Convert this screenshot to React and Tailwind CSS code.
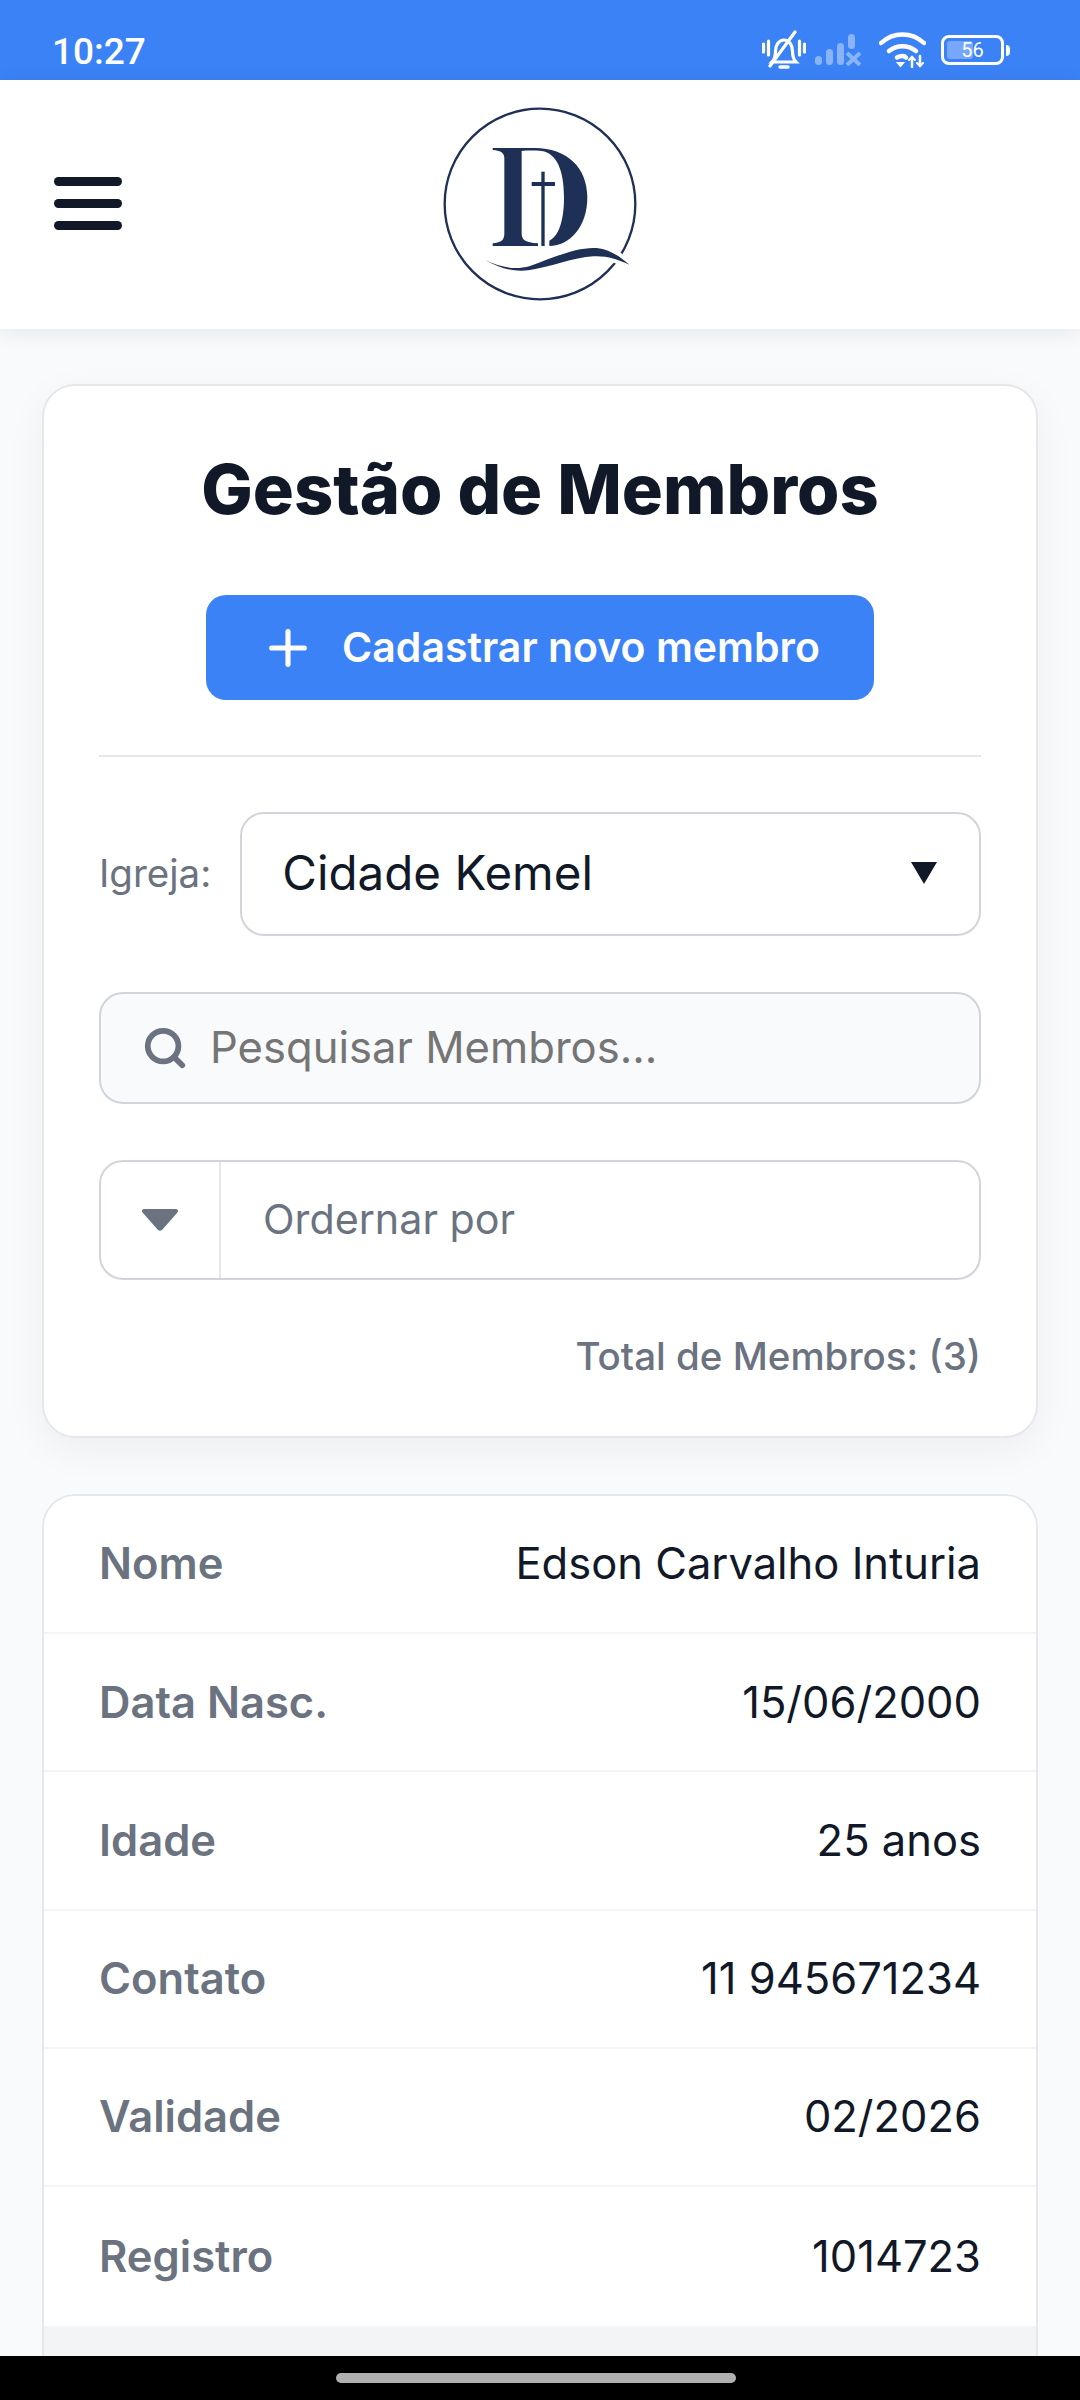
import React from 'react';
import { Plus, Search } from 'lucide-react';

const rows = [
  ['Nome', 'Edson Carvalho Inturia'],
  ['Data Nasc.', '15/06/2000'],
  ['Idade', '25 anos'],
  ['Contato', '11 945671234'],
  ['Validade', '02/2026'],
  ['Registro', '1014723'],
];

function StatusBar() {
  return (
    <div className="flex h-[80px] shrink-0 items-end justify-between bg-[#3b82f6] pb-[10px] pl-[52px] pr-[70px] text-white">
      <span className="font-[Roboto,sans-serif] text-[37px] font-medium leading-[36px]">10:27</span>
      <div className="flex items-center">
        <svg width="44" height="40" viewBox="0 0 44 40" fill="none" stroke="white" strokeWidth="3.200" strokeLinecap="round">
          <path d="M1.500 14v8M6.500 11v14M37.500 11v14M42.500 14v8" />
          <path d="M10 32c3-3 3.500-6 3.500-11 0-6 3.500-11 8.500-11 5 0 8.500 5 8.500 11 0 5 .5 8 3.500 11z" />
          <path d="M18 37h8" strokeWidth="3.500" />
          <path d="M8 36 33 2" />
        </svg>
        <svg className="ml-[9px] opacity-40" width="48" height="32" viewBox="0 0 48 32" fill="white">
          <rect x="0" y="22" width="7" height="9" rx="3.500" />
          <rect x="11" y="15" width="7" height="16" rx="3.500" />
          <rect x="22" y="9" width="7" height="22" rx="3.500" />
          <rect x="33" y="0" width="7" height="15" rx="3.500" />
          <path d="M32 19l13 12M45 19 32 31" stroke="white" strokeWidth="4" />
        </svg>
        <svg className="ml-[16px]" width="47" height="36" viewBox="0 0 47 36" fill="none" stroke="white" strokeWidth="4.500" strokeLinecap="round">
          <path d="M2 11C14-.5 33-.5 45 11" />
          <path d="M10 19c8-6.500 19-6.500 27 0" />
          <path d="M18 25.500c3.500-2 7.500-2 9 0" />
          <path d="M19 31h5l-2.500 3z" fill="white" strokeWidth="2" />
          <path d="M33 25v10M41 24v10" strokeWidth="2.500" />
          <path d="M30 28l3-3 3 3M38 31l3 3 3-3" strokeWidth="2" />
        </svg>
        <div className="relative ml-[15px] flex h-[30px] w-[63px] items-center justify-center rounded-[8px] border-[3px] border-white">
          <div className="absolute bottom-[3px] left-[3px] top-[3px] w-[26px] rounded-[3px] bg-white/30" />
          <span className="relative font-[Roboto,sans-serif] text-[20px] leading-none">56</span>
        </div>
        <div className="ml-[2px] h-[11px] w-[4px] rounded-r-full bg-white" />
      </div>
    </div>
  );
}

function Logo() {
  return (
    <svg width="240" height="230" viewBox="0 0 720 690" fill="#1f3057">
      <circle cx="360" cy="342" r="286" fill="none" stroke="#1f3057" strokeWidth="7" />
      <path d="M218 174H345C440 174 502 232 502 322C502 410 450 468 388 468V452C415 440 432 395 432 322C432 240 410 190 365 183C345 181 320 181 305 183V430C305 450 315 458 354 460V468H218V460C245 458 253 450 253 430V205C253 190 245 182 218 180Z" />
      <rect x="364" y="245" width="10" height="223" />
      <rect x="335" y="276" width="70" height="12" />
      <path d="M195 510C240 530 280 542 330 528C400 503 470 470 530 474C570 478 600 500 628 524C590 507 560 497 520 499C460 502 390 532 330 540C280 547 240 535 195 510Z" stroke="white" strokeWidth="24" strokeLinejoin="round" />
      <path d="M195 510C240 530 280 542 330 528C400 503 470 470 530 474C570 478 600 500 628 524C590 507 560 497 520 499C460 502 390 532 330 540C280 547 240 535 195 510Z" />
    </svg>
  );
}

function Header() {
  return (
    <header className="relative z-10 grid h-[249px] shrink-0 grid-cols-[1fr_auto_1fr] items-center bg-white shadow-[0_4px_20px_rgba(0,0,0,0.08)]">
      <div className="mb-[2px] ml-[54px] flex w-[68px] flex-col gap-[13px]">
        <div className="h-[9px] rounded-full bg-[#111827]" />
        <div className="h-[9px] rounded-full bg-[#111827]" />
        <div className="h-[9px] rounded-full bg-[#111827]" />
      </div>
      <Logo />
      <div />
    </header>
  );
}

export default function App() {
  return (
    <div className="flex h-[2400px] flex-col overflow-hidden bg-[#f9fafb] font-[Inter,sans-serif]">
      <StatusBar />
      <Header />
      <main className="min-h-0 flex-1 overflow-hidden px-[42px] pt-[55px]">
        <section className="rounded-[33px] border-2 border-[#e5e7eb] bg-white px-[55px] pb-[50px] pt-[59px] shadow-[0_12px_40px_rgba(0,0,0,0.05)]">
          <h1 className="text-center text-[68.5px] font-extrabold leading-[90px] text-[#111827]">Gestão de Membros</h1>
          <div className="mt-[60px] flex justify-center">
            <button className="flex h-[105px] w-[668px] items-center justify-center gap-[26px] rounded-[20px] bg-[#3b82f6] text-[41px] font-semibold text-white">
              <Plus size={56} strokeWidth={2.2} />
              Cadastrar novo membro
            </button>
          </div>
          <div className="mt-[55px] h-[2px] bg-[#e5e7eb]" />
          <div className="mt-[55px] flex items-center gap-[29px]">
            <label className="text-[38.5px] text-[#6b7280]">Igreja:</label>
            <div className="flex h-[124px] flex-1 items-center justify-between rounded-[24px] border-2 border-[#d1d5db] bg-white pb-[2px] pl-[40px] pr-[42px] text-[47.5px] text-[#111827]">
              Cidade Kemel
              <svg width="26" height="22" viewBox="0 0 26 22" fill="#111827"><path d="M0 0h26L13 22z" /></svg>
            </div>
          </div>
          <div className="mt-[56px] flex h-[112px] items-center rounded-[24px] border-2 border-[#d1d5db] bg-[#f9fafb] pl-[41px] text-[43.6px] text-[#757575]">
            <Search size={46} strokeWidth={3} className="text-[#6b7280]" />
            <span className="ml-[22px]">Pesquisar Membros...</span>
          </div>
          <div className="mt-[56px] flex h-[120px] items-center rounded-[24px] border-2 border-[#d1d5db] bg-white">
            <div className="flex h-full w-[120px] shrink-0 items-center justify-center border-r-2 border-[#e5e7eb]">
              <svg width="38" height="24" viewBox="0 0 38 24" fill="#6b7280"><path d="M4 1h30c3 0 4 2 2 4L21 22c-1 1-3 1-4 0L2 5C0 3 1 1 4 1z" /></svg>
            </div>
            <span className="pl-[42px] text-[41.25px] text-[#6b7280]">Ordernar por</span>
          </div>
          <p className="mt-[48px] text-right text-[38.5px] font-medium text-[#6b7280]">Total de Membros: (3)</p>
        </section>
        <section className="mt-[56px] overflow-hidden rounded-t-[33px] border-2 border-b-0 border-[#e5e7eb] bg-[#f3f4f6]">
          {rows.map(([label, value], i) => (
            <div
              key={label}
              className={`flex h-[138.3px] items-center justify-between bg-white px-[55px] ${i < 5 ? 'border-b-2 border-[#f3f4f6]' : ''}`}
            >
              <span className="text-[43.5px] font-semibold text-[#6b7280]">{label}</span>
              <span className="text-[43.5px] text-[#111827]">{value}</span>
            </div>
          ))}
          <div className="h-[60px]" />
        </section>
      </main>
      <div className="flex h-[44px] shrink-0 items-start justify-center bg-black pr-[8px] pt-[17px]">
        <div className="h-[10px] w-[400px] rounded-full bg-[#b0b0b0]" />
      </div>
    </div>
  );
}
